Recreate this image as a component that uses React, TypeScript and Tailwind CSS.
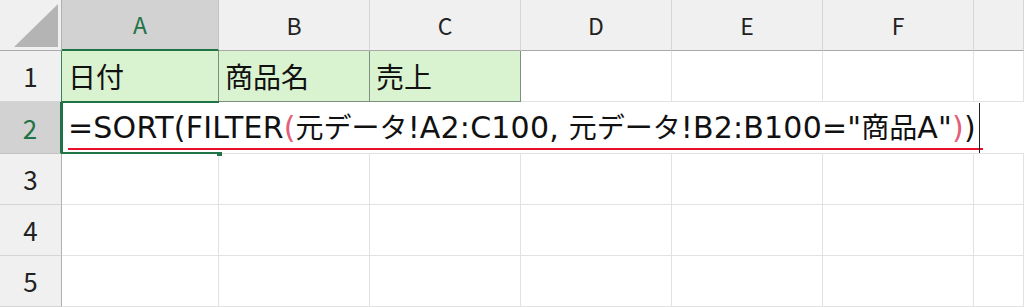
import React from "react";

const cols = ["A", "B", "C", "D", "E", "F", ""];
const jp = { fontFamily: '"Noto Sans CJK JP", "Noto Sans", sans-serif' };
const latinFont = { fontFamily: '"DejaVu Sans", "Noto Sans CJK JP", sans-serif' };

function ColHead({ label, active }: { label: string; active?: boolean }) {
  return (
    <div
      className={
        "flex items-center justify-center border-r border-b box-border text-[23px] leading-none " +
        (active
          ? "bg-[#d2d2d2] text-[#217346] border-r-[#c4c4c4] border-b-2 border-b-[#217346]"
          : "bg-[#f0f0f0] text-[#222] border-r-[#d6d6d6] border-b-[#a9a9a9]")
      }
      style={jp}
    >
      {label}
    </div>
  );
}

function RowHead({ n, active }: { n: number; active?: boolean }) {
  return (
    <div
      className={
        "flex items-center justify-center border-r border-b box-border text-[26px] leading-none " +
        (active
          ? "bg-[#d2d2d2] text-[#217346] border-b-[#c4c4c4] border-r-2 border-r-[#217346]"
          : "bg-[#f0f0f0] text-[#222] border-b-[#d4d4d4] border-r-[#b0b0b0]")
      }
      style={jp}
    >
      {n}
    </div>
  );
}

function Cell({ children, green, cls = "" }: { children?: React.ReactNode; green?: boolean; cls?: string }) {
  return (
    <div
      className={
        "flex items-center pl-[6px] border-r border-b box-border text-[28px] leading-none text-[#111] whitespace-nowrap " +
        (green ? "bg-[#d9f2d0] border-r-[#7f8f7f] border-b-[#7f8f7f] " : "bg-white border-r-[#e2e2e2] border-b-[#e2e2e2] ") +
        cls
      }
      style={jp}
    >
      {children}
    </div>
  );
}

// latin parts of the formula render larger than the kana/kanji, like Yu Gothic does
function L({ children, cls = "" }: { children: React.ReactNode; cls?: string }) {
  return (
    <span className={"text-[30px] tracking-[0.2px] " + cls} style={latinFont}>
      {children}
    </span>
  );
}

function J({ children }: { children: React.ReactNode }) {
  return (
    <span className="text-[28px]" style={jp}>
      {children}
    </span>
  );
}

export default function App() {
  const red = "text-[#e3607a]";
  return (
    <div className="w-[1024px] h-[307px] overflow-hidden bg-white grid grid-cols-[62px_157px_151px_151px_151px_151px_151px_50px] grid-rows-[51px_51px_52px_51px_51px_51px]">
      {/* header row */}
      <div className="bg-[#f0f0f0] border-r border-b border-r-[#b0b0b0] border-b-[#a9a9a9] box-border flex items-end justify-end pr-[3px] pb-[3px]">
        <svg width="44" height="43" viewBox="0 0 44 43">
          <polygon points="44,0 44,43 0,43" fill="#b4b4b4" />
        </svg>
      </div>
      {cols.map((c, i) => (
        <ColHead key={i} label={c} active={i === 0} />
      ))}

      {/* row 1 */}
      <RowHead n={1} />
      <Cell green cls="border-l border-l-[#3f7f55] -ml-px">日付</Cell>
      <Cell green>商品名</Cell>
      <Cell green>売上</Cell>
      <Cell />
      <Cell />
      <Cell />
      <Cell />

      {/* row 2 */}
      <RowHead n={2} active />
      <div className="col-span-7 relative border-b border-b-[#e2e2e2] box-border bg-white">
        {/* active cell outline, open on the right while editing */}
        <div className="absolute left-[-1px] top-[-1px] w-[158px] h-[53px] border-2 border-r-0 border-[#217346] box-border" />
        <div className="absolute left-[155px] top-[50px] w-[5px] h-[4px] bg-[#217346]" />
        <div className="relative flex items-center h-full pl-[6px] leading-none text-[#111] whitespace-nowrap">
          <span>
            <L>=SORT(FILTER</L>
            <L cls={red}>(</L>
            <J>元データ</J>
            <L>!A2:C100, </L>
            <J>元データ</J>
            <L>!B2:B100="</L>
            <J>商品</J>
            <L>A"</L>
            <L cls={red}>)</L>
            <L>)</L>
          </span>
        </div>
        <div className="absolute left-[6px] w-[915px] top-[46px] h-[2px] bg-[#e8102b]" />
        <div className="absolute left-[917px] top-[1px] w-px h-[50px] bg-[#222]" />
      </div>

      {/* rows 3-5 */}
      {[3, 4, 5].map((n) => (
        <React.Fragment key={n}>
          <RowHead n={n} />
          {cols.map((_, i) => (
            <Cell key={i} />
          ))}
        </React.Fragment>
      ))}
    </div>
  );
}
